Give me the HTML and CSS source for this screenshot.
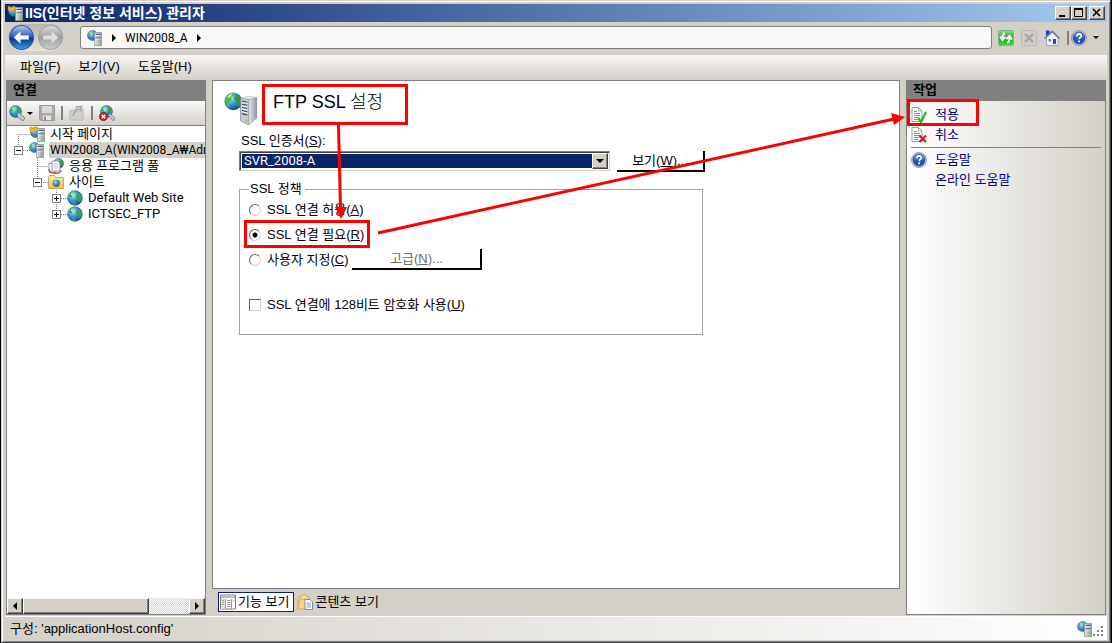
FILE: index.html
```
<!DOCTYPE html>
<html lang="ko">

<head>
    <meta charset="UTF-8">
    <meta name="viewport" content="width=device-width, initial-scale=1.0">
    <title>IIS(인터넷 정보 서비스) 관리자</title>
    <link rel="stylesheet" href="styles.css">
</head>

<body>
    <!-- Shared icon shapes -->
    <svg class="sprite" aria-hidden="true">
        <defs>
            <radialGradient id="sea" cx="35%" cy="30%" r="75%">
                <stop offset="0" stop-color="#b8ecff" />
                <stop offset="0.5" stop-color="#3a93e6" />
                <stop offset="1" stop-color="#1240a4" />
            </radialGradient>
            <linearGradient id="metal" x1="0" x2="1">
                <stop offset="0" stop-color="#e4e9ee" />
                <stop offset="1" stop-color="#8b969f" />
            </linearGradient>
            <linearGradient id="ball" x1="0" y1="0" x2="0" y2="1">
                <stop offset="0" stop-color="#b4cdf0" />
                <stop offset="0.45" stop-color="#2d62bc" />
                <stop offset="0.55" stop-color="#0b3391" />
                <stop offset="1" stop-color="#35a6f2" />
            </linearGradient>
            <linearGradient id="ball-gray" x1="0" y1="0" x2="0" y2="1">
                <stop offset="0" stop-color="#dcdcdc" />
                <stop offset="0.5" stop-color="#9e9e9e" />
                <stop offset="1" stop-color="#cfcfcf" />
            </linearGradient>
            <linearGradient id="green" x1="0" y1="0" x2="0" y2="1">
                <stop offset="0" stop-color="#8fdc8f" />
                <stop offset="0.5" stop-color="#1fa32b" />
                <stop offset="1" stop-color="#37e637" />
            </linearGradient>
            <linearGradient id="folder" x1="0" y1="0" x2="0" y2="1">
                <stop offset="0" stop-color="#fbeeb0" />
                <stop offset="1" stop-color="#e5bd5c" />
            </linearGradient>
        </defs>
        <symbol id="globe" viewBox="0 0 16 16">
            <circle cx="8" cy="8" r="7.3" fill="url(#sea)" stroke="#174a8c" stroke-width=".6" />
            <path d="M2 5 5 1.8 7.5 1.2 6.6 3.5 5 5 4.8 7 3.5 8.2 1.5 8z" fill="#49b840" />
            <path d="M10 2.2 13 3.2 15 6.8 14.6 10 12.4 12 11 10.5 10.8 8.5 9.3 7 9.6 5z" fill="#35a83a" />
            <path d="M5 11 8 12 8.4 15 5.5 14.5z" fill="#35a83a" />
            <path d="M3.4 4.3 5.6 2.4 6.8 2.5 5 5.2z" fill="#d0f49d" />
        </symbol>
        <symbol id="tower" viewBox="0 0 8 14">
            <path d="M.5.5h7v13h-7z" fill="url(#metal)" stroke="#8a959e" stroke-width=".8" />
            <path d="M1.5 2.5h5M1.5 6h5" stroke="#4b5862" stroke-width="1" />
            <path d="M1.5 3.5h5M1.5 7h5" stroke="#fff" stroke-width=".7" />
            <path d="M4.5 11h2v1.5h-2z" fill="#8be000" />
        </symbol>
        <symbol id="site-server" viewBox="0 0 16 16">
            <use href="#globe" x="0" y="0" width="11" height="11" />
            <use href="#tower" x="7" y="2" width="8" height="14" />
        </symbol>
        <symbol id="start-server" viewBox="0 0 16 16">
            <use href="#globe" x="1" y="1" width="11" height="11" />
            <path d="M1 1l4 1.5L7 .5l2 3 1.5 1-2.5 1L6 5 4 7 1 5z" fill="#f6b52b" stroke="#c37d09" stroke-width=".6" />
            <use href="#tower" x="8" y="2" width="8" height="14" />
        </symbol>
        <symbol id="big-server" viewBox="0 0 32 32">
            <circle cx="9" cy="9" r="8.6" fill="url(#sea)" />
            <path d="M1 6 5 1.5 10 .5 9 4 7 5 7.5 8 5 9 6 13 4 15.5 1.3 12z" fill="#49b840" />
            <path d="M11 2 15 4 17.5 9 15 14 12 12 12 9 9.8 7z" fill="#35993a" />
            <path d="M3 4.6 6.2 1.9 8.5 1.8 5.5 5.6z" fill="#d0f49d" />
            <path d="M16 6l8 1v25l-8-4z" fill="#c3cad0" stroke="#6f787f" stroke-width=".6" />
            <path d="M24 7l8-1.5V25l-8 7z" fill="url(#metal)" stroke="#858d94" stroke-width=".4" />
            <path d="M16 6l9-2 7 1.5L24 7z" fill="#edf1f4" stroke="#858d94" stroke-width=".4" />
            <path d="M17.5 9l5 .9m-5 2.1l5 .9m-5 2.1l5 1m-5 2l5 1.1m-5 1.9l5 1.2" stroke="#38424a" stroke-width="1.1" />
            <path d="M17.5 10.3l5 .9m-5 2.1l5 .9m-5 2.1l5 1m-5 2l5 1.1" stroke="#fff" stroke-width=".8" />
            <path d="M20.5 26.5l2.3 1v2l-2.3-1z" fill="#8be000" />
        </symbol>
        <symbol id="connect" viewBox="0 0 16 16">
            <use href="#globe" x="0" y="0" width="13" height="13" />
            <path d="M8 9l2-1.5L16 13l-1.5 2.5-2-.3L8.5 12z" fill="#bcc8d2" stroke="#647482" stroke-width=".8" />
        </symbol>
        <symbol id="disconnect" viewBox="0 0 16 16">
            <use href="#globe" x="1" y="0" width="13" height="13" />
            <path d="M9 10l2-1.5L16 13l-1 2.3-2-.3z" fill="#bcc8d2" stroke="#647482" stroke-width=".7" />
            <circle cx="4.5" cy="11.5" r="4.2" fill="#d1201b" stroke="#8f0d0a" stroke-width=".6" />
            <path d="M2.8 9.8l3.4 3.4m0-3.4l-3.4 3.4" stroke="#fff" stroke-width="1.4" />
        </symbol>
        <symbol id="save" viewBox="0 0 16 16">
            <path d="M.5.5h15v15H2L.5 14z" fill="#a9a9a9" stroke="#9c9c9c" />
            <path d="M3 1h10v7H3z" fill="#dadada" />
            <path d="M4 10.5h8V15H4z" fill="#e8e8e8" />
            <path d="M5 11.5h2V15H5z" fill="#8b8b8b" />
        </symbol>
        <symbol id="folder-up" viewBox="0 0 16 16">
            <path d="M1 5.5h4l1-1.5h8V15H1z" fill="#cfcfcc" stroke="#b6b6b3" />
            <path d="M4 11c1-4 3-6 6-7M6.500 2l6-.5-1.500 5" fill="none" stroke="#a9a9a6" stroke-width="1.6" />
        </symbol>
        <symbol id="pools" viewBox="0 0 16 16">
            <use href="#globe" x="5" y="0" width="11" height="11" />
            <path d="M1 5.5h7v9H1z" fill="#fff" stroke="#777f8c" stroke-width=".8" />
            <path d="M4 3h6l2 2v8H4z" fill="#fff" stroke="#777f8c" stroke-width=".8" />
            <path d="M5.5 6h5m-5 2h5m-5 2h5" stroke="#a9b5c8" stroke-width=".8" />
            <path d="M1 11c0 5 12 6 12 1" fill="none" stroke="#d13a2e" stroke-width="1.3" />
        </symbol>
        <symbol id="sites" viewBox="0 0 16 16">
            <path d="M.5 3.5l1-2h5l1 2h8v11H.5z" fill="url(#folder)" stroke="#c0983d" stroke-width=".8" />
            <use href="#globe" x="4.5" y="5.5" width="7.5" height="7.5" />
        </symbol>
        <symbol id="refresh" viewBox="0 0 16 16">
            <rect x=".5" y=".5" width="15" height="15" rx="1" fill="url(#green)" stroke="#7fb27f" />
            <path d="M7 3.5C5 3.5 4.5 5 4.5 8M2 6.5l2.5 3.5L7.5 7M9 12.5c2 0 2.5-1.5 2.5-4.5M8.5 9l3-3L14 9.5" fill="none" stroke="#fff" stroke-width="1.9" />
        </symbol>
        <symbol id="stop" viewBox="0 0 16 16">
            <rect x=".5" y=".5" width="15" height="15" rx="1" fill="#cfcecb" stroke="#bbb9b4" />
            <path d="M4 4l8 8m0-8l-8 8" stroke="#a5a5a2" stroke-width="2.2" />
        </symbol>
        <symbol id="home" viewBox="0 0 16 16">
            <path d="M2 .5h3.5v5H2z" fill="#2430d0" />
            <path d="M2.5 7.5l6-5.5 5.5 5.5v8H2.5z" fill="#eef2f8" stroke="#8a97ad" stroke-width=".8" />
            <path d="M.5 8.5L8.3 1.2 15.5 8.5" fill="none" stroke="#5a78b4" stroke-width="1.5" />
            <path d="M9 9h3v5H9z" fill="#254f93" />
            <path d="M4.5 9H7v2.5H4.5z" fill="#5f88c8" />
        </symbol>
        <symbol id="help" viewBox="0 0 16 16">
            <circle cx="8" cy="8" r="7.5" fill="#dde2ea" stroke="#7a8290" stroke-width=".8" />
            <circle cx="8" cy="8" r="6.4" fill="#2552b8" />
            <path d="M2.4 7a5.7 5.7 0 0 1 11.2 0c-3 1.5-8 1.5-11.2 0z" fill="#5078cc" />
            <path d="M5.8 6.2c0-3.2 4.7-3 4.5-.3-.1 1.5-2.2 1.6-2.2 3.4" fill="none" stroke="#fff" stroke-width="1.6" />
            <path d="M7.2 10.5h1.8v1.8H7.2z" fill="#fff" />
        </symbol>
        <symbol id="doc" viewBox="0 0 16 16">
            <path d="M1 .5h6.5l3.5 3.5v10.5H1z" fill="#fdfeff" stroke="#8d98a5" stroke-width=".9" />
            <path d="M7.5.5V4H11" fill="none" stroke="#8d98a5" stroke-width=".8" />
            <path d="M3 4.5h3M3 6.5h6M3 8.5h6M3 10.5h5M3 12.5h4" stroke="#5f84b6" stroke-width=".9" />
        </symbol>
        <symbol id="apply" viewBox="0 0 16 16">
            <use href="#doc" width="16" height="16" />
            <path d="M7.5 11l2.5 4 5-10" fill="none" stroke="#2db321" stroke-width="2.2" />
        </symbol>
        <symbol id="cancel" viewBox="0 0 16 16">
            <use href="#doc" width="16" height="16" />
            <path d="M8.5 8.5l6.5 6.5m0-6.5l-6.5 6.5" stroke="#d41b1b" stroke-width="2.2" />
        </symbol>
        <symbol id="features" viewBox="0 0 16 16">
            <path d="M.5 1h15v14H.5z" fill="#fff" stroke="#7f7f7f" />
            <path d="M1 1.5h14V4H1z" fill="#b9bdc4" />
            <path d="M1 4.5h4.5V15H1z" fill="#e4e1d4" />
            <path d="M5.5 5v10M11.5 5v10M2 6.5h2M2 8.5h2M2 10.5h2M7 6.5h3.5M7 8.5h3.5M7 10.5h3.5M7 12.5h3.5M12.5 7h2" stroke="#a0a09c" stroke-width="1" />
        </symbol>
        <symbol id="content" viewBox="0 0 16 16">
            <path d="M1 3h3l1-2h4l1 2h2v10H1z" fill="url(#folder)" stroke="#c49d46" stroke-width=".8" />
            <path d="M.5 15L3 5h6v10z" fill="#f5d57a" stroke="#c49d46" stroke-width=".7" />
            <path d="M8 5.5h5l2.5 2.5v7.5H8z" fill="#fff" stroke="#5277ae" stroke-width=".8" />
            <path d="M9.5 9h4.5m-4.5 2h4.5m-4.5 2h4.5" stroke="#5b83bd" stroke-width=".8" />
        </symbol>
    </svg>

    <div class="window">
        <header class="title-bar">
            <svg class="icon"><use href="#start-server" /></svg>
            <h1 class="title">IIS(인터넷 정보 서비스) 관리자</h1>
            <div class="window-buttons">
                <button class="window-button" aria-label="최소화"><svg viewBox="0 0 12 10"><path d="M2 8h6" /></svg></button>
                <button class="window-button" aria-label="최대화"><svg viewBox="0 0 12 10"><path d="M1 1h9" /><path class="thin" d="M1.5 1v7.5h8V1" /></svg></button>
                <button class="window-button close" aria-label="닫기"><svg viewBox="0 0 12 10"><path class="cross" d="M2 1l7 7m0-7l-7 7" /></svg></button>
            </div>
        </header>

        <nav class="nav-bar">
            <div class="travel">
                <button class="round" aria-label="뒤로">
                    <svg viewBox="0 0 24 24"><circle cx="12" cy="12" r="11.5" fill="url(#ball)" stroke="#35579a" /><path d="M4.5 12L11 6v4h8v4h-8v4z" fill="#fff" /></svg>
                </button>
                <button class="round" aria-label="앞으로" disabled>
                    <svg viewBox="0 0 24 24"><circle cx="12" cy="12" r="11.5" fill="url(#ball-gray)" stroke="#a3a3a3" /><path d="M19.5 12L13 6v4H5v4h8v4z" fill="#dedede" /></svg>
                </button>
            </div>
            <div class="address">
                <svg class="icon"><use href="#site-server" /></svg>
                <i class="crumb-arrow"></i>
                <span>WIN2008_A</span>
                <i class="crumb-arrow"></i>
            </div>
            <div class="nav-tools">
                <button class="tool" aria-label="새로 고침"><svg class="icon"><use href="#refresh" /></svg></button>
                <button class="tool" aria-label="중지" disabled><svg class="icon"><use href="#stop" /></svg></button>
                <button class="tool" aria-label="홈"><svg class="icon"><use href="#home" /></svg></button>
                <button class="tool help" aria-label="도움말"><i class="bar"></i><svg class="icon"><use href="#help" /></svg><i class="drop-arrow"></i></button>
            </div>
        </nav>

        <div class="menu-bar">
            <button class="menu">파일(F)</button>
            <button class="menu">보기(V)</button>
            <button class="menu">도움말(H)</button>
        </div>

        <div class="panes">
            <aside class="pane connections">
                <h2 class="pane-title">연결</h2>
                <div class="tool-bar">
                    <button class="tool" aria-label="연결 만들기"><svg class="icon"><use href="#connect" /></svg><i class="drop-arrow"></i></button>
                    <button class="tool" aria-label="저장" disabled><svg class="icon"><use href="#save" /></svg></button>
                    <i class="bar"></i>
                    <button class="tool" aria-label="위로" disabled><svg class="icon"><use href="#folder-up" /></svg></button>
                    <i class="bar"></i>
                    <button class="tool" aria-label="연결 끊기"><svg class="icon"><use href="#disconnect" /></svg></button>
                </div>
                <div class="tree">
                    <svg class="tree-lines" viewBox="0 0 100 100"><path d="M11.5 8v16M11.5 8.5h11M16 24.5h7M30.5 32v24M30.5 40.5h10M36 56.5h6M49.5 64v24M54 72.5h7M54 88.5h7" /></svg>
                    <div class="node"><i class="no-toggle"></i><svg class="icon"><use href="#start-server" /></svg><span>시작 페이지</span></div>
                    <div class="node selected"><button class="toggle minus" aria-label="접기"></button><svg class="icon"><use href="#site-server" /></svg><span>WIN2008_A(WIN2008_A₩Adr</span></div>
                    <div class="node level-1"><i class="no-toggle"></i><svg class="icon"><use href="#pools" /></svg><span>응용 프로그램 풀</span></div>
                    <div class="node level-1"><button class="toggle minus" aria-label="접기"></button><svg class="icon"><use href="#sites" /></svg><span>사이트</span></div>
                    <div class="node level-2"><button class="toggle plus" aria-label="펼치기"></button><svg class="icon"><use href="#globe" /></svg><span>Default Web Site</span></div>
                    <div class="node level-2"><button class="toggle plus" aria-label="펼치기"></button><svg class="icon"><use href="#globe" /></svg><span>ICTSEC_FTP</span></div>
                </div>
                <div class="scroll-bar">
                    <button class="scroll-button" aria-label="왼쪽"><i class="arrow-left"></i></button>
                    <div class="thumb"></div>
                    <div class="track"></div>
                    <button class="scroll-button" aria-label="오른쪽"><i class="crumb-arrow"></i></button>
                </div>
            </aside>

            <div class="center">
                <main class="feature">
                    <div class="feature-head">
                        <svg class="big-icon"><use href="#big-server" /></svg>
                        <h2 class="feature-title">FTP SSL 설정</h2>
                    </div>
                    <form class="settings">
                        <label class="cert-label" for="cert">SSL 인증서(<u>S</u>):</label>
                        <div class="cert-row">
                            <div class="combo">
                                <select id="cert" class="combo-select">
                                    <option>SVR_2008-A</option>
                                </select>
                                <span class="combo-button"><i class="drop-arrow"></i></span>
                            </div>
                            <button type="button" class="button view">보기(<u>W</u>)...</button>
                        </div>
                        <fieldset class="policy">
                            <legend>SSL 정책</legend>
                            <div class="option"><input type="radio" name="policy" id="allow"><label for="allow">SSL 연결 허용(<u>A</u>)</label></div>
                            <div class="option"><input type="radio" name="policy" id="require" checked><label for="require">SSL 연결 필요(<u>R</u>)</label></div>
                            <div class="option"><input type="radio" name="policy" id="custom"><label for="custom">사용자 지정(<u>C</u>)</label><button type="button" class="button advanced" disabled>고급(<u>N</u>)...</button></div>
                            <div class="option encrypt"><input type="checkbox" id="encrypt"><label for="encrypt">SSL 연결에 128비트 암호화 사용(<u>U</u>)</label></div>
                        </fieldset>
                    </form>
                </main>
                <div class="view-tabs">
                    <button class="view-tab active"><svg class="icon"><use href="#features" /></svg>기능 보기</button>
                    <button class="view-tab"><svg class="icon"><use href="#content" /></svg>콘텐츠 보기</button>
                </div>
            </div>

            <aside class="pane actions">
                <h2 class="pane-title">작업</h2>
                <div class="action-list">
                    <a class="action" href="#"><svg class="icon"><use href="#apply" /></svg>적용</a>
                    <a class="action" href="#"><svg class="icon"><use href="#cancel" /></svg>취소</a>
                    <hr class="divider">
                    <a class="action" href="#"><svg class="icon"><use href="#help" /></svg>도움말</a>
                    <a class="action" href="#"><i class="icon"></i>온라인 도움말</a>
                </div>
            </aside>
        </div>

        <footer class="status-bar">
            <span>구성: 'applicationHost.config'</span>
            <svg class="icon status-icon"><use href="#site-server" /></svg>
            <svg class="grip" viewBox="0 0 12 12"><path d="M8 0h2v2H8zM4 4h2v2H4zM8 4h2v2H8zM0 8h2v2H0zM4 8h2v2H4zM8 8h2v2H8z" fill="#808080" /></svg>
        </footer>
    </div>

    <!-- Walkthrough marks over the window -->
    <svg class="marks" aria-hidden="true">
        <g fill="none" stroke="#ff0000" stroke-width="3">
            <rect x="263.5" y="85.5" width="143" height="38" />
            <rect x="245.5" y="221.5" width="123" height="25" />
            <rect x="908.5" y="100.5" width="69" height="24" />
            <path d="M338.5 125L340.5 208M378 233L894 119" />
        </g>
        <path d="M335 207h12l-6 12zM891 113l14 4-11 8z" fill="#ff0000" />
    </svg>
</body>

</html>
```

FILE: styles.css
```
* {
    margin: 0;
    padding: 0;
    box-sizing: border-box;
}

body {
    font-family: 'Liberation Sans', 'Noto Sans CJK KR', sans-serif;
    font-size: 13px;
    line-height: 16px;
    color: #000;
    background: #000;
    height: 100vh;
    padding: 0 1px;
    overflow: hidden;
    position: relative;
}

button,
select,
input {
    font: inherit;
    color: inherit;
    background: none;
    border: none;
}

u {
    text-underline-offset: 1px;
}

.sprite {
    position: absolute;
    width: 0;
    height: 0;
}

.icon {
    width: 16px;
    height: 16px;
    flex: none;
    display: block;
}

.window {
    height: 100%;
    display: flex;
    flex-direction: column;
    background: #d4d0c8;
    border-right: 1px solid #404040;
    border-bottom: 1px solid #404040;
    box-shadow: inset 1px 1px #d4d0c8, inset 2px 2px #fff, inset -1px -1px #808080;
    padding: 4px 3px 2px 4px;
}

/* Title bar */
.title-bar {
    display: flex;
    align-items: center;
    gap: 2px;
    height: 18px;
    padding: 0 2px;
    background: linear-gradient(to right, #0a246a, #a6caf0);
    color: #fff;
    flex: none;
}

.title {
    flex: 1;
    font-size: 14px;
    font-weight: bold;
}

.window-buttons {
    display: flex;
}

.window-button {
    width: 16px;
    height: 14px;
    background: #d4d0c8;
    border: 1px solid;
    border-color: #fff #404040 #404040 #fff;
    box-shadow: inset -1px -1px #808080;
}

.window-button.close {
    margin-left: 2px;
}

.window-button svg {
    width: 12px;
    height: 10px;
    display: block;
    margin: 1px;
    fill: none;
    stroke: #000;
    stroke-width: 2;
}

.window-button .thin {
    stroke-width: 1;
}

.window-button .cross {
    stroke-width: 1.5;
}

/* Navigation */
.nav-bar {
    display: flex;
    align-items: center;
    height: 33px;
    flex: none;
    padding: 0 8px 2px 3px;
}

.travel {
    display: flex;
    gap: 4px;
    background: linear-gradient(#bab6ae, #e6e3de);
    border-radius: 14px;
    padding: 1px;
    margin-right: 16px;
}

.round,
.round svg {
    width: 25px;
    height: 25px;
    display: block;
}

.address {
    flex: 1;
    display: flex;
    align-items: center;
    gap: 9px;
    height: 23px;
    padding: 0 6px;
    font-family: Roboto, 'Noto Sans CJK KR', sans-serif;
    font-size: 12px;
    background: #faf9f7;
    border: 1px solid #808080;
    border-radius: 3px;
}

.crumb-arrow,
.arrow-left {
    display: block;
    border: 4px solid transparent;
    border-left-color: #000;
    border-right-width: 0;
}

.arrow-left {
    border-left-width: 0;
    border-right: 4px solid #000;
}

.nav-tools {
    display: flex;
    align-items: center;
    gap: 7px;
    padding-left: 6px;
}

.tool {
    display: flex;
    align-items: center;
    gap: 2px;
}

.bar {
    width: 2px;
    height: 14px;
    background: #808080;
}

.tool.help .drop-arrow {
    margin-left: 4px;
}

.drop-arrow {
    display: block;
    border: 3px solid transparent;
    border-top-color: #000;
    border-bottom-width: 0;
}

.menu-bar {
    display: flex;
    gap: 18px;
    height: 25px;
    flex: none;
    padding: 0 15px 2px;
    background: linear-gradient(#f7f6f4, #d4d0c8);
}

/* Panes */
.panes {
    flex: 1;
    min-height: 0;
    display: flex;
    gap: 6px;
    padding: 0 1px;
}

.pane {
    width: 200px;
    flex: none;
    display: flex;
    flex-direction: column;
    border: 1px solid #808080;
    border-top: none;
    min-height: 0;
}

.pane-title {
    height: 21px;
    flex: none;
    padding: 2px 6px;
    font-size: 13px;
    font-weight: bold;
    background: #808080;
}

.tool-bar {
    display: flex;
    align-items: center;
    gap: 6px;
    height: 25px;
    flex: none;
    padding: 0 2px;
    background: linear-gradient(#fafafa, #d4d0c8);
    border-bottom: 1px solid #808080;
}

.tree {
    flex: 1;
    font-family: Roboto, 'Noto Sans CJK KR', sans-serif;
    background: #fff;
    overflow: hidden;
    position: relative;
}

.tree-lines {
    position: absolute;
    left: 0;
    top: 0;
    width: 100px;
    height: 100px;
    fill: none;
    stroke: #808080;
    stroke-dasharray: 1 1;
}

.node {
    position: relative;
    display: flex;
    align-items: center;
    height: 16px;
    padding-left: 7px;
    white-space: nowrap;
}

.node span {
    padding-left: 1px;
    margin-left: 4px;
}

.node.selected span {
    flex: 1;
    font-size: 12px;
    background: #d4d0c8;
}

.level-1 {
    padding-left: 26px;
}

.level-2 {
    padding-left: 45px;
}

.toggle,
.no-toggle {
    width: 9px;
    height: 9px;
    flex: none;
    margin-right: 6px;
}

.toggle {
    border: 1px solid #808080;
    background: linear-gradient(#000, #000) center / 5px 1px no-repeat, #fff;
}

.toggle.plus {
    background: linear-gradient(#000, #000) center / 5px 1px no-repeat, linear-gradient(#000, #000) center / 1px 5px no-repeat, #fff;
}

.scroll-bar {
    display: flex;
    height: 16px;
    flex: none;
}

.scroll-button,
.thumb {
    width: 16px;
    display: flex;
    align-items: center;
    justify-content: center;
    background: #d4d0c8;
    border: 1px solid;
    border-color: #fff #404040 #404040 #fff;
    box-shadow: inset -1px -1px #808080;
}

.thumb {
    width: 126px;
}

.track {
    flex: 1;
    background: repeating-conic-gradient(#fff 0 25%, #d4d0c8 0 50%) 0 0 / 2px 2px;
}

/* Center */
.center {
    flex: 1;
    min-width: 0;
    display: flex;
    flex-direction: column;
}

.feature {
    flex: 1;
    background: #fff;
    border: 1px solid #808080;
    padding: 11px;
}

.feature-head {
    display: flex;
    gap: 16px;
    height: 41px;
}

.big-icon {
    width: 33px;
    height: 33px;
}

.feature-title {
    font-size: 18px;
    line-height: 20px;
    font-weight: 300;
}

.settings {
    padding-left: 15px;
}

.cert-label {
    display: block;
    padding-left: 2px;
    margin-bottom: 2px;
}

.cert-row {
    display: flex;
    gap: 7px;
}

.combo {
    width: 371px;
    height: 20px;
    display: flex;
    border: 1px solid;
    border-color: #808080 #d4d0c8 #d4d0c8 #808080;
    padding: 2px;
    box-shadow: inset 1px 1px #404040;
    position: relative;
}

.combo-select {
    appearance: none;
    flex: 1;
    padding-left: 2px;
    font-family: Roboto, 'Noto Sans CJK KR', sans-serif;
    line-height: 14px;
    color: #fff;
    background: #0a246a;
    margin-right: 15px;
}

.combo-button {
    position: absolute;
    right: 1px;
    top: 1px;
    bottom: 1px;
    width: 16px;
    display: flex;
    align-items: center;
    justify-content: center;
    background: #d4d0c8;
    border: 1px solid;
    border-color: #fff #404040 #404040 #fff;
    box-shadow: inset -1px -1px #808080;
    pointer-events: none;
}

.combo-button .drop-arrow {
    border-width: 4px 4px 0;
}

.button {
    height: 21px;
    background: #fff;
    border-right: 2px solid #000;
    border-bottom: 2px solid #000;
}

.button.view {
    width: 88px;
}

.button.advanced {
    width: 130px;
    margin-left: 4px;
    color: #6c6c6c;
}

.policy {
    width: 464px;
    height: 154px;
    border: 1px solid #a0a0a0;
    padding: 0 9px;
    margin-top: 9px;
}

.policy legend {
    padding: 0 3px 0 1px;
}

.option {
    display: flex;
    align-items: center;
    height: 25px;
}

.option input {
    appearance: none;
    width: 12px;
    height: 12px;
    flex: none;
    margin-right: 6px;
    border: 1px solid;
    border-color: #606060 #d4d0c8 #d4d0c8 #606060;
}

.option input[type="radio"] {
    border-radius: 50%;
}

.option input[type="radio"]:checked {
    background: radial-gradient(circle, #000 0 2px, #fff 3px);
}

.option.encrypt {
    margin-top: 20px;
}

.view-tabs {
    display: flex;
    gap: 2px;
    padding: 3px 6px;
}

.view-tab {
    display: flex;
    align-items: center;
    gap: 2px;
    height: 20px;
    padding: 0 2px 0 1px;
}

.view-tab.active {
    background: #fff;
    border: 1px solid #0a246a;
    padding: 0 4px 0 1px;
}

/* Actions */
.actions {
    background: linear-gradient(to right, #fff, #d4d0c8);
}

.action-list {
    display: flex;
    flex-direction: column;
    padding: 4px;
}

.action {
    display: flex;
    align-items: center;
    gap: 8px;
    height: 20px;
    color: #00007f;
    text-decoration: none;
}

.divider {
    border: none;
    height: 1px;
    background: #808080;
    margin: 2px 0;
}

/* Status bar */
.status-bar {
    display: flex;
    align-items: center;
    height: 24px;
    flex: none;
    margin-top: 1px;
    padding: 0 2px 0 5px;
    border-top: 1px solid #fff;
    background: linear-gradient(to right, #d4d0c8, #fff);
}

.status-icon {
    margin-left: auto;
}

.grip {
    width: 12px;
    height: 12px;
    align-self: flex-end;
    margin-bottom: 2px;
}

.marks {
    position: absolute;
    left: 0;
    top: 0;
    width: 1112px;
    height: 643px;
    pointer-events: none;
}
```
